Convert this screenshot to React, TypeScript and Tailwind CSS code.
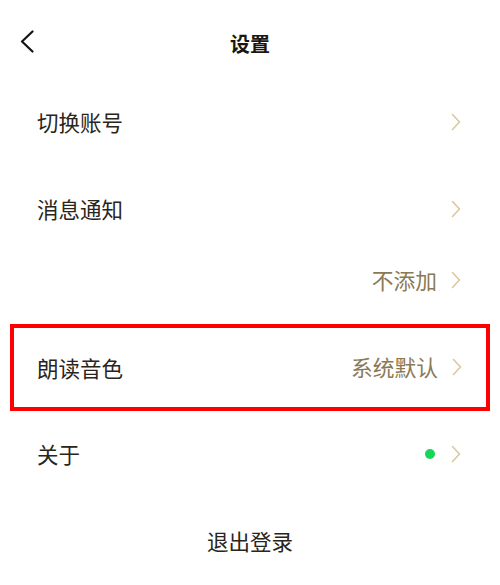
import React from "react";

const Chevron = () => (
  <svg width="10" height="18" viewBox="0 0 10 18" fill="none" className="shrink-0">
    <polyline points="1.5,1.5 8.5,9 1.5,16.5" stroke="#dcc79e" strokeWidth="1.6" strokeLinecap="round" strokeLinejoin="round" />
  </svg>
);

const Row = ({ label, value, dot, className = "" }: { label?: string; value?: string; dot?: boolean; className?: string }) => (
  <div className={`flex items-center ${className}`}>
    <span className="flex-1 text-[21.5px] leading-none text-[#2a251b]">{label}</span>
    {value && <span className="text-[21.75px] leading-none text-[#8a7955] mr-[14px]">{value}</span>}
    {dot && <span className="w-[10px] h-[10px] rounded-full bg-[#16d65a] mr-[16px]" />}
    <Chevron />
  </div>
);

export default function App() {
  return (
    <div
      className="w-[500px] h-[585px] bg-white overflow-hidden flex flex-col"
      style={{ fontFamily: '"Noto Sans CJK SC", "Noto Sans", sans-serif' }}
    >
      <div className="relative h-[79px] flex justify-center pt-[33px]">
        <svg width="14" height="23" viewBox="0 0 14 23" fill="none" className="absolute left-[20px] top-[30px]">
          <polyline points="12.5,1.5 2,11.5 12.5,21.5" stroke="#141414" strokeWidth="2.2" strokeLinecap="round" strokeLinejoin="round" />
        </svg>
        <span className="text-[20px] leading-[22px] font-bold text-[#1a1712]">设置</span>
      </div>
      <Row label="切换账号" className="h-[87px] pl-[37px] pr-[39px]" />
      <Row label="消息通知" className="h-[87px] pl-[37px] pr-[39px]" />
      <Row value="不添加" className="h-[56px] pl-[37px] pr-[39px]" />
      <div className="mt-[16px] mx-[10px] border-[4px] border-[#ff0000]">
        <Row label="朗读音色" value="系统默认" className="h-[79px] pl-[23px] pr-[24px]" />
      </div>
      <Row label="关于" dot className="h-[87px] pl-[37px] pr-[39px]" />
      <div className="h-[88px] flex items-center justify-center">
        <span className="text-[21.5px] leading-none text-[#2a251b]">退出登录</span>
      </div>
    </div>
  );
}
